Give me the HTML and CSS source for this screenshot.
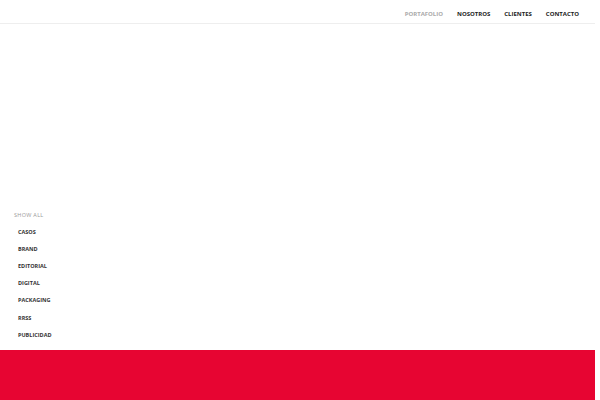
FILE: index.html
```html
<!DOCTYPE html>
<html lang="es">
<head>
<meta charset="utf-8">
<link rel="stylesheet" href="styles.css">
</head>
<body>
<div class="page">
  <header class="header">
    <nav class="nav">
      <a class="nav-item active">PORTAFOLIO</a>
      <a class="nav-item">NOSOTROS</a>
      <a class="nav-item">CLIENTES</a>
      <a class="nav-item">CONTACTO</a>
    </nav>
  </header>
  <main class="main">
    <ul class="filters">
      <li class="filter all">SHOW ALL</li>
      <li class="filter">CASOS</li>
      <li class="filter">BRAND</li>
      <li class="filter">EDITORIAL</li>
      <li class="filter">DIGITAL</li>
      <li class="filter">PACKAGING</li>
      <li class="filter">RRSS</li>
      <li class="filter">PUBLICIDAD</li>
    </ul>
  </main>
  <section class="band"></section>
</div>
</body>
</html>
```
FILE: styles.css
```css
* { box-sizing: border-box; }
html, body { margin: 0; padding: 0; background: #fff; }
body { font-family: "Open Sans", "DejaVu Sans", sans-serif; overflow: hidden; }
.page { width: 595px; }
.header {
  height: 24px;
  border-bottom: 1px solid #eeeeee;
  display: flex;
  justify-content: flex-end;
  align-items: center;
  padding-right: 16px;
}
.nav { display: flex; gap: 14px; padding-top: 5px; }
.nav-item {
  font-size: 6px;
  font-weight: bold;
  color: #222;
}
.nav-item.active { color: #aaa; }
.main { height: 326px; display: flex; flex-direction: column; justify-content: flex-end; }
.filters { list-style: none; margin: 0; padding: 0 0 6px 14px; }
.filter {
  font-size: 5.5px;
  font-weight: bold;
  color: #333;
  height: 17.2px;
  line-height: 17.2px;
  padding-left: 4px;
}
.filter.all { color: #999; font-weight: normal; padding-left: 0; letter-spacing: 0.3px; }
.band { height: 50px; background: #e70532; }
```
